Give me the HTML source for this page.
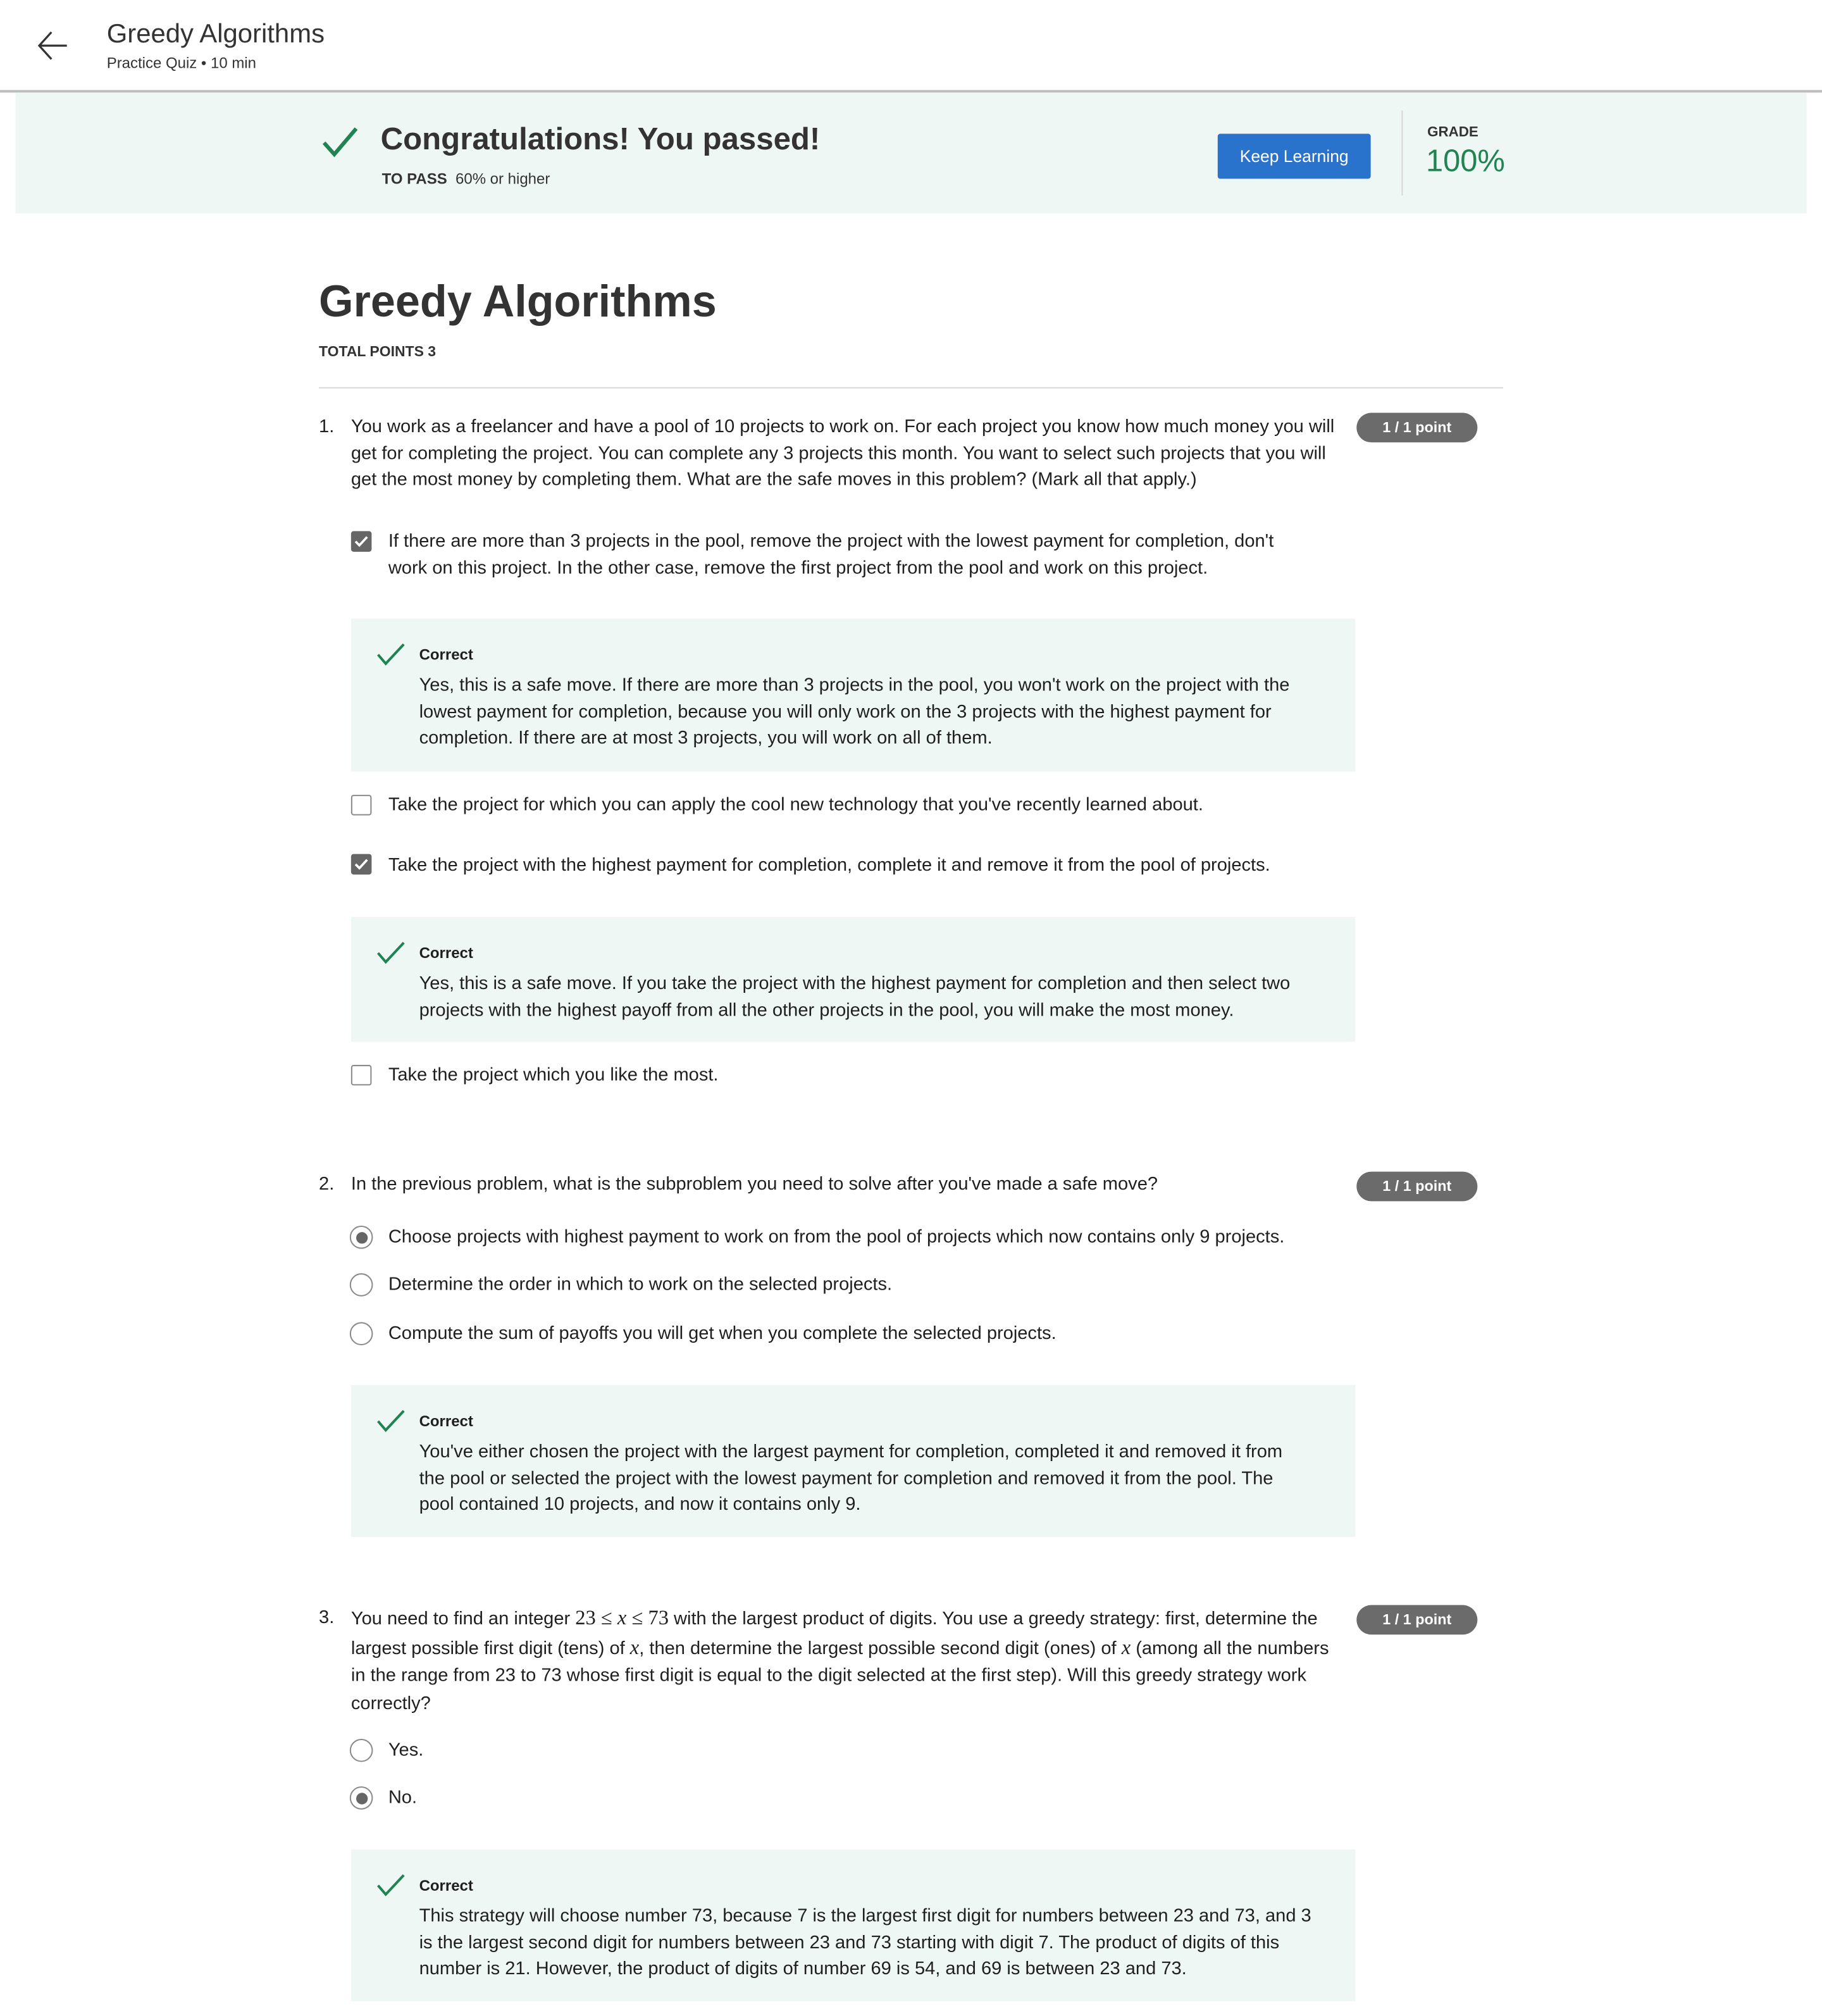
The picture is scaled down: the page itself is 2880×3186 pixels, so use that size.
<!DOCTYPE html>
<html><head><meta charset="utf-8"><style>
html,body{margin:0;padding:0;background:#fff;overflow:hidden}
body{width:2880px;height:3186px;position:relative}
#w{position:absolute;left:0;top:0;width:1417px;height:1568px;transform:scale(2.0325);transform-origin:0 0;font-family:"Liberation Sans",sans-serif;color:#1f1f1f}
.a{position:absolute;white-space:nowrap}
.t{position:absolute;font-size:14.3px;line-height:20.7px;color:#1f1f1f;white-space:nowrap}
.badge{position:absolute;left:1055px;width:94px;height:23px;border-radius:12px;background:#6b6b6b;color:#fff;font-weight:bold;font-size:11.5px;line-height:24px;text-align:center}
.cb{position:absolute;left:273px;width:14px;height:14px;border:1.5px solid #8a8a8a;border-radius:2px;background:#fff}
.cb.on{background:#666;border-color:#666}
.rd{position:absolute;left:272px;width:16px;height:16px;border:1.5px solid #8a8a8a;border-radius:50%;background:#fff}
.rd.on::after{content:"";position:absolute;left:3.5px;top:3.5px;width:9px;height:9px;border-radius:50%;background:#666}
.fb{position:absolute;left:273px;width:781px;background:#eef7f4}
.corr{position:absolute;left:53px;font-weight:bold;font-size:11.8px;color:#1f1f1f}
.ck{position:absolute;left:20px}
.fb .t{left:53px}
.m{font-family:"Liberation Serif",serif;font-size:16px}
</style></head><body><div id="w">
<svg class="a" style="left:28px;top:23px" width="26" height="26" viewBox="0 0 26 26"><path d="M24 12.5H3M12 2L2.5 12.5L12 23" fill="none" stroke="#333" stroke-width="1.6"/></svg>
<div class="a" style="left:83px;top:15px;font-size:20.6px;color:#333">Greedy Algorithms</div>
<div class="a" style="left:83px;top:42px;font-size:11.8px;color:#333">Practice Quiz • 10 min</div>
<div class="a" style="left:0;top:70px;width:1417px;height:1.5px;background:#bdbdbd"></div>
<div class="a" style="left:12px;top:72px;width:1393px;height:94px;background:#eff7f4"></div>
<svg class="a" style="left:250px;top:98px" width="30" height="26" viewBox="0 0 30 26"><path d="M2 13L10 22L27 2" fill="none" stroke="#1f8354" stroke-width="3"/></svg>
<div class="a" style="left:296px;top:95px;font-size:24.2px;font-weight:bold;color:#333">Congratulations! You passed!</div>
<div class="a" style="left:297px;top:132px;font-size:11.8px;color:#333"><b>TO PASS</b>&nbsp; 60% or higher</div>
<div class="a" style="left:947px;top:104px;width:119px;height:35px;background:#2a73cc;border-radius:2px;color:#fff;font-size:13px;line-height:35px;text-align:center">Keep Learning</div>
<div class="a" style="left:1090px;top:86px;width:1px;height:66px;background:#d8d8d8"></div>
<div class="a" style="left:1110px;top:97px;font-size:11px;font-weight:bold;color:#333">GRADE</div>
<div class="a" style="left:1109px;top:112px;font-size:24px;color:#1f8354">100%</div>
<div class="a" style="left:248px;top:216px;font-size:34.5px;font-weight:bold;color:#333">Greedy Algorithms</div>
<div class="a" style="left:248px;top:268px;font-size:11.3px;font-weight:bold;color:#333">TOTAL POINTS 3</div>
<div class="a" style="left:248px;top:301px;width:921px;height:1px;background:#d8d8d8"></div>

<div class="t" style="left:248px;top:322px">1.</div>
<div class="t" style="left:273px;top:322px">You work as a freelancer and have a pool of 10 projects to work on. For each project you know how much money you will<br>get for completing the project. You can complete any 3 projects this month. You want to select such projects that you will<br>get the most money by completing them. What are the safe moves in this problem? (Mark all that apply.)</div>
<div class="badge" style="top:321px">1 / 1 point</div>
<div class="cb on" style="top:413px"><svg width="14" height="14" viewBox="0 0 14 14" style="position:absolute;left:0;top:0"><path d="M2.5 7L5.5 10L11.5 3.5" fill="none" stroke="#fff" stroke-width="1.8"/></svg></div>
<div class="t" style="left:302px;top:411px">If there are more than 3 projects in the pool, remove the project with the lowest payment for completion, don't<br>work on this project. In the other case, remove the first project from the pool and work on this project.</div>
<div class="fb" style="top:481px;height:119px"><svg class="ck" style="top:19px" width="22" height="18" viewBox="0 0 22 18"><path d="M1 9L7 16L21 1" fill="none" stroke="#1f8354" stroke-width="2"/></svg><div class="corr" style="top:21px">Correct</div><div class="t" style="top:42px">Yes, this is a safe move. If there are more than 3 projects in the pool, you won't work on the project with the<br>lowest payment for completion, because you will only work on the 3 projects with the highest payment for<br>completion. If there are at most 3 projects, you will work on all of them.</div></div>
<div class="cb" style="top:618px"></div>
<div class="t" style="left:302px;top:616px">Take the project for which you can apply the cool new technology that you've recently learned about.</div>
<div class="cb on" style="top:664px"><svg width="14" height="14" viewBox="0 0 14 14" style="position:absolute;left:0;top:0"><path d="M2.5 7L5.5 10L11.5 3.5" fill="none" stroke="#fff" stroke-width="1.8"/></svg></div>
<div class="t" style="left:302px;top:663px">Take the project with the highest payment for completion, complete it and remove it from the pool of projects.</div>
<div class="fb" style="top:713px;height:97px"><svg class="ck" style="top:19px" width="22" height="18" viewBox="0 0 22 18"><path d="M1 9L7 16L21 1" fill="none" stroke="#1f8354" stroke-width="2"/></svg><div class="corr" style="top:21px">Correct</div><div class="t" style="top:42px">Yes, this is a safe move. If you take the project with the highest payment for completion and then select two<br>projects with the highest payoff from all the other projects in the pool, you will make the most money.</div></div>
<div class="cb" style="top:828px"></div>
<div class="t" style="left:302px;top:826px">Take the project which you like the most.</div>

<div class="t" style="left:248px;top:911px">2.</div>
<div class="t" style="left:273px;top:911px">In the previous problem, what is the subproblem you need to solve after you've made a safe move?</div>
<div class="badge" style="top:911px">1 / 1 point</div>
<div class="rd on" style="top:953px"></div>
<div class="t" style="left:302px;top:952px">Choose projects with highest payment to work on from the pool of projects which now contains only 9 projects.</div>
<div class="rd" style="top:990px"></div>
<div class="t" style="left:302px;top:989px">Determine the order in which to work on the selected projects.</div>
<div class="rd" style="top:1028px"></div>
<div class="t" style="left:302px;top:1027px">Compute the sum of payoffs you will get when you complete the selected projects.</div>
<div class="fb" style="top:1077px;height:118px"><svg class="ck" style="top:19px" width="22" height="18" viewBox="0 0 22 18"><path d="M1 9L7 16L21 1" fill="none" stroke="#1f8354" stroke-width="2"/></svg><div class="corr" style="top:21px">Correct</div><div class="t" style="top:42px">You've either chosen the project with the largest payment for completion, completed it and removed it from<br>the pool or selected the project with the lowest payment for completion and removed it from the pool. The<br>pool contained 10 projects, and now it contains only 9.</div></div>

<div class="t" style="left:248px;top:1248px">3.</div>
<div class="t" style="left:273px;top:1248px;line-height:21.5px">You need to find an integer <span class="m">23 ≤ <i>x</i> ≤ 73</span> with the largest product of digits. You use a greedy strategy: first, determine the<br>largest possible first digit (tens) of <span class="m"><i>x</i></span>, then determine the largest possible second digit (ones) of <span class="m"><i>x</i></span> (among all the numbers<br>in the range from 23 to 73 whose first digit is equal to the digit selected at the first step). Will this greedy strategy work<br>correctly?</div>
<div class="badge" style="top:1248px">1 / 1 point</div>
<div class="rd" style="top:1352px"></div>
<div class="t" style="left:302px;top:1351px">Yes.</div>
<div class="rd on" style="top:1389px"></div>
<div class="t" style="left:302px;top:1388px">No.</div>
<div class="fb" style="top:1438px;height:118px"><svg class="ck" style="top:19px" width="22" height="18" viewBox="0 0 22 18"><path d="M1 9L7 16L21 1" fill="none" stroke="#1f8354" stroke-width="2"/></svg><div class="corr" style="top:21px">Correct</div><div class="t" style="top:42px">This strategy will choose number 73, because 7 is the largest first digit for numbers between 23 and 73, and 3<br>is the largest second digit for numbers between 23 and 73 starting with digit 7. The product of digits of this<br>number is 21. However, the product of digits of number 69 is 54, and 69 is between 23 and 73.</div></div>
</div></body></html>
